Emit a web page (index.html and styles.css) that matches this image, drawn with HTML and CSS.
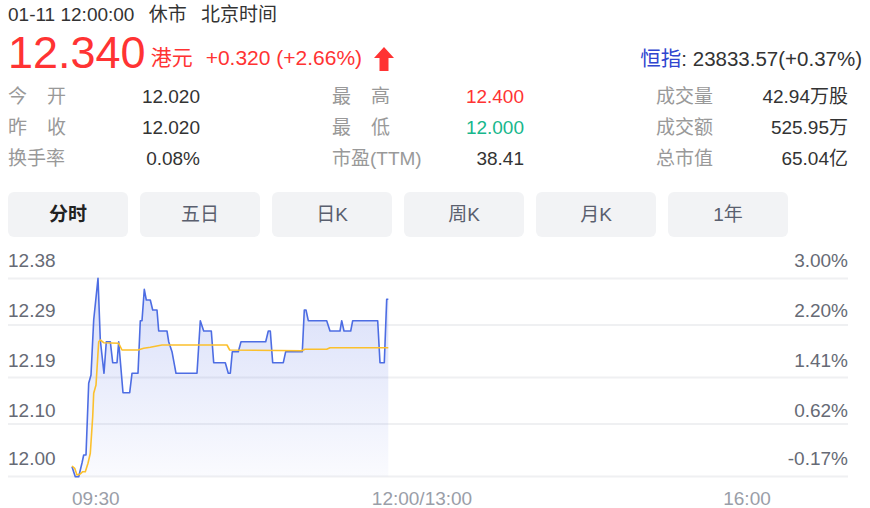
FILE: index.html
```html
<!DOCTYPE html>
<html>
<head>
    <meta charset="UTF-8">
    <title>行情</title>
    <link rel="stylesheet" href="styles.css">
</head>
<body>
    <div class="meta">
        <span>01-11 12:00:00</span>
        <span>休市</span>
        <span>北京时间</span>
    </div>

    <div class="quote">
        <div class="price-group">
            <span class="price">12.340</span><span class="unit">港元</span><span class="change">+0.320 (+2.66%)</span><svg class="arrow" width="20" height="24" viewBox="0 0 20 24"><path d="M10 0 L20 11 L14.5 11 L14.5 24 L5.5 24 L5.5 11 L0 11 Z" fill="#ff3333"/></svg>
        </div>
        <div class="index"><span class="index-name">恒指</span>: 23833.57(+0.37%)</div>
    </div>

    <div class="stats">
        <div class="stat"><span class="label spread"><i>今</i><i>开</i></span><span class="value">12.020</span></div>
        <div class="stat"><span class="label spread"><i>最</i><i>高</i></span><span class="value up">12.400</span></div>
        <div class="stat"><span class="label">成交量</span><span class="value">42.94万股</span></div>
        <div class="stat"><span class="label spread"><i>昨</i><i>收</i></span><span class="value">12.020</span></div>
        <div class="stat"><span class="label spread"><i>最</i><i>低</i></span><span class="value down">12.000</span></div>
        <div class="stat"><span class="label">成交额</span><span class="value">525.95万</span></div>
        <div class="stat"><span class="label">换手率</span><span class="value">0.08%</span></div>
        <div class="stat"><span class="label">市盈(TTM)</span><span class="value">38.41</span></div>
        <div class="stat"><span class="label">总市值</span><span class="value">65.04亿</span></div>
    </div>

    <div class="tabs">
        <div class="tab active">分时</div>
        <div class="tab">五日</div>
        <div class="tab">日K</div>
        <div class="tab">周K</div>
        <div class="tab">月K</div>
        <div class="tab">1年</div>
    </div>

    <svg class="chart" width="840" height="263" viewBox="8 245 840 263">
        <defs>
            <linearGradient id="area" x1="0" y1="0" x2="0" y2="1">
                <stop offset="0" stop-color="#5a74e6" stop-opacity="0.24"/>
                <stop offset="1" stop-color="#5a74e6" stop-opacity="0.03"/>
            </linearGradient>
        </defs>

        <g class="grid">
            <line x1="8" x2="848" y1="278.5" y2="278.5"/>
            <line x1="8" x2="848" y1="325" y2="325"/>
            <line x1="8" x2="848" y1="377.5" y2="377.5"/>
            <line x1="8" x2="848" y1="424" y2="424"/>
            <line x1="8" x2="848" y1="476.5" y2="476.5"/>
        </g>

        <polygon fill="url(#area)" points="72,466.7 75.3,476.7 78.7,476.7 82,463 83.7,455 86,455 88.7,383.3 91,375 93.7,320 98,278.3 100.3,340 104,373.3 106.3,341.7 110.3,341.7 112.7,362.7 117,362.7 118.7,341.7 123,392.7 129.7,392.7 132,373.3 138,373.3 140.3,320.7 142,320.7 144.3,289.3 146.3,300 150.3,300 152.7,310 157,310 158.7,331 167,331 168.7,341.7 172,351.7 176,373.3 197,373.3 200.3,320.7 203.7,331 211.3,331 213.7,362.7 225.3,362.7 228.3,373.3 230.3,373.3 232.3,351.7 238.3,351.7 241,341.7 265.7,341.7 268.3,331 270.3,331 272.7,362.7 283.3,362.7 285.7,351.7 302.3,351.7 304.3,310 306,310 308.3,320.7 326.7,320.7 330,331 340,331 341.7,320.7 344,331 350.7,331 352.7,320.7 377.7,320.7 380,362.7 384.3,362.7 386.7,299.3 388.3,299.3 388.3,476.5 72,476.5"/>

        <polyline class="price-line" points="72,466.7 75.3,476.7 78.7,476.7 82,463 83.7,455 86,455 88.7,383.3 91,375 93.7,320 98,278.3 100.3,340 104,373.3 106.3,341.7 110.3,341.7 112.7,362.7 117,362.7 118.7,341.7 123,392.7 129.7,392.7 132,373.3 138,373.3 140.3,320.7 142,320.7 144.3,289.3 146.3,300 150.3,300 152.7,310 157,310 158.7,331 167,331 168.7,341.7 172,351.7 176,373.3 197,373.3 200.3,320.7 203.7,331 211.3,331 213.7,362.7 225.3,362.7 228.3,373.3 230.3,373.3 232.3,351.7 238.3,351.7 241,341.7 265.7,341.7 268.3,331 270.3,331 272.7,362.7 283.3,362.7 285.7,351.7 302.3,351.7 304.3,310 306,310 308.3,320.7 326.7,320.7 330,331 340,331 341.7,320.7 344,331 350.7,331 352.7,320.7 377.7,320.7 380,362.7 384.3,362.7 386.7,299.3 388.3,299.3"/>

        <polyline class="avg-line" points="72,466 74.7,468.3 77,475 80.3,474 82.7,471.7 85.3,471.7 88,463.3 90.3,453.3 92.7,416.7 93.7,393.3 96,385 98.7,341.7 100.3,340 103.7,342.7 118.7,343.3 122,350 138,350 143.7,348.3 150.3,347.3 162,345 227,345 229.7,350 301.7,350.7 305,349.3 326.7,349.3 330,347.7 388.3,347.7"/>

        <g class="axis-y">
            <text x="8" y="267">12.38</text>
            <text x="8" y="317">12.29</text>
            <text x="8" y="366.5">12.19</text>
            <text x="8" y="416.5">12.10</text>
            <text x="8" y="465">12.00</text>
        </g>
        <g class="axis-y right">
            <text x="848" y="267">3.00%</text>
            <text x="848" y="317">2.20%</text>
            <text x="848" y="366.5">1.41%</text>
            <text x="848" y="416.5">0.62%</text>
            <text x="848" y="465">-0.17%</text>
        </g>
        <g class="axis-x">
            <text x="72" y="505">09:30</text>
            <text x="422" y="505" text-anchor="middle">12:00/13:00</text>
            <text x="747" y="505" text-anchor="middle">16:00</text>
        </g>
    </svg>
</body>
</html>
```

FILE: styles.css
```css
* {
    box-sizing: border-box;
}

body {
    margin: 0;
    padding: 3px 8px 0;
    width: 870px;
    height: 508px;
    overflow: hidden;
    font-family: "Liberation Sans", Arial, "Noto Sans CJK SC", sans-serif;
    font-size: 19px;
    color: #333;
    background: #fff;
}

.meta {
    line-height: 24px;
    height: 24px;
}

.meta span {
    margin-right: 9px;
}

.quote {
    display: flex;
    align-items: flex-end;
    height: 52px;
}

.price-group {
    font-size: 45px;
    line-height: 52px;
    height: 52px;
    white-space: nowrap;
    color: #ff3333;
}

.unit,
.change {
    font-size: 21px;
    line-height: 1;
    vertical-align: 3px;
}

.unit {
    margin-left: 5px;
}

.change {
    margin-left: 13px;
}

.arrow {
    margin-left: 12px;
    vertical-align: -3px;
}

.index {
    margin-left: auto;
    margin-bottom: 9px;
    font-size: 20.5px;
    line-height: 22px;
}

.index-name {
    color: #3045cf;
}

.stats {
    display: grid;
    grid-template-columns: repeat(3, 192px);
    column-gap: 132px;
    margin-top: 2px;
}

.stat {
    display: flex;
    justify-content: space-between;
    height: 31px;
    line-height: 31px;
}

.label {
    color: #999;
}

.spread {
    display: flex;
    justify-content: space-between;
    width: 58px;
}

.spread i {
    font-style: normal;
}

.value.up {
    color: #ff3333;
}

.value.down {
    color: #17b78c;
}

.tabs {
    display: flex;
    gap: 12px;
    margin-top: 18px;
}

.tab {
    width: 120px;
    height: 45px;
    line-height: 45px;
    text-align: center;
    background: #f2f3f5;
    border-radius: 6px;
    color: #5a5f6e;
}

.tab.active {
    color: #222;
    font-weight: bold;
}

.chart {
    display: block;
    margin-top: 8px;
    overflow: visible;
}

.grid line {
    stroke: #eff0f2;
    stroke-width: 2;
}

.price-line {
    fill: none;
    stroke: #4d6de3;
    stroke-width: 1.6;
    stroke-linejoin: round;
}

.avg-line {
    fill: none;
    stroke: #fbc02d;
    stroke-width: 1.6;
    stroke-linejoin: round;
}

.chart text {
    font-family: "Liberation Sans", Arial, sans-serif;
    font-size: 19px;
}

.axis-y text {
    fill: #666a75;
}

.axis-y.right text {
    text-anchor: end;
}

.axis-x text {
    fill: #9a9ea8;
}
```
